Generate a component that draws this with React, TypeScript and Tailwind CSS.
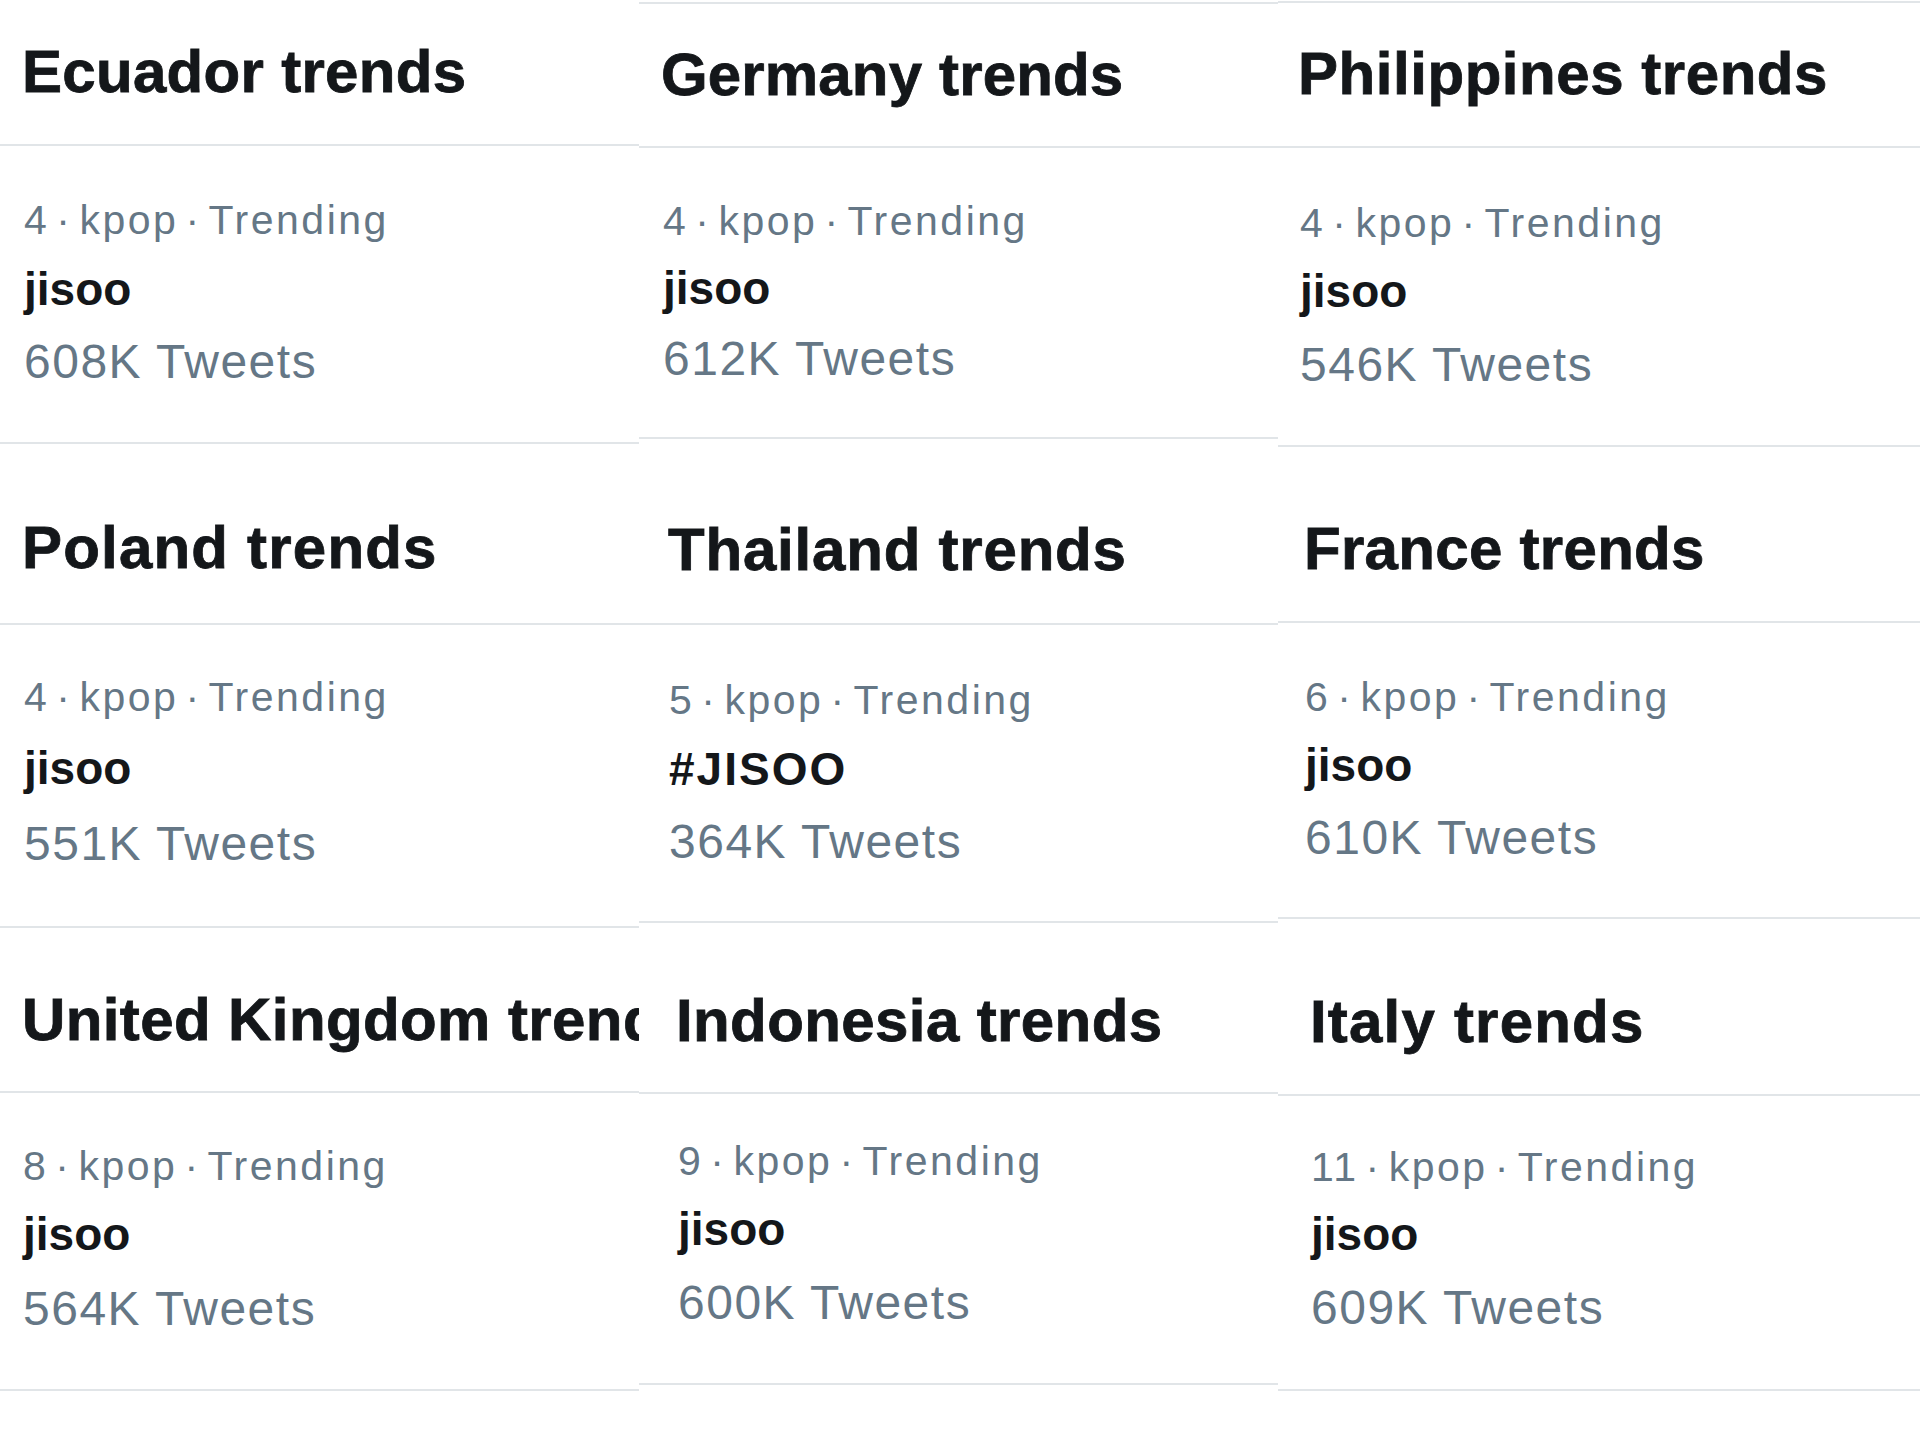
import type React from "react";

interface Cell {
  title: string;
  rank: string;
  name: string;
  count: string;
  head: string;
  titleCls: string;
  body: string;
  nameGap: string;
  countGap: string;
  nameCls?: string;
}

interface Column {
  cls: string;
  cells: Cell[];
}

const columns: Column[] = [
  {
    cls: "w-[639px]",
    cells: [
      {
        title: "Ecuador trends",
        rank: "4",
        name: "jisoo",
        count: "608K",
        head: "h-[146px] pt-[42px] pl-[22px]",
        titleCls: "tracking-[0.3px]",
        body: "h-[298px] pt-[54px] pl-[24px]",
        nameGap: "mt-[25px]",
        countGap: "mt-[26px]",
      },
      {
        title: "Poland trends",
        rank: "4",
        name: "jisoo",
        count: "551K",
        head: "h-[181px] pt-[74px] pl-[22px]",
        titleCls: "tracking-[1.2px]",
        body: "h-[303px] pt-[52px] pl-[24px]",
        nameGap: "mt-[27px]",
        countGap: "mt-[29px]",
      },
      {
        title: "United Kingdom trends",
        rank: "8",
        name: "jisoo",
        count: "564K",
        head: "h-[165px] pt-[62px] pl-[22px]",
        titleCls: "tracking-[0.4px]",
        body: "h-[298px] pt-[53px] pl-[23px]",
        nameGap: "mt-[24px]",
        countGap: "mt-[28px]",
      },
    ],
  },
  {
    cls: "w-[639px] pt-[2px]",
    cells: [
      {
        title: "Germany trends",
        rank: "4",
        name: "jisoo",
        count: "612K",
        head: "h-[146px] pt-[41px] pl-[22px] border-t-2",
        titleCls: "tracking-[0.15px]",
        body: "h-[291px] pt-[53px] pl-[24px]",
        nameGap: "mt-[23px]",
        countGap: "mt-[24px]",
      },
      {
        title: "Thailand trends",
        rank: "5",
        name: "#JISOO",
        count: "364K",
        head: "h-[186px] pt-[81px] pl-[29px]",
        titleCls: "tracking-[0.8px]",
        body: "h-[298px] pt-[55px] pl-[30px]",
        nameGap: "mt-[25px]",
        countGap: "mt-[26px]",
        nameCls: "tracking-[2px] font-semibold",
      },
      {
        title: "Indonesia trends",
        rank: "9",
        name: "jisoo",
        count: "600K",
        head: "h-[171px] pt-[68px] pl-[37px]",
        titleCls: "tracking-[0.4px]",
        body: "h-[291px] pt-[47px] pl-[39px]",
        nameGap: "mt-[24px]",
        countGap: "mt-[27px]",
      },
    ],
  },
  {
    cls: "w-[642px] pt-[1px]",
    cells: [
      {
        title: "Philippines trends",
        rank: "4",
        name: "jisoo",
        count: "546K",
        head: "h-[147px] pt-[41px] pl-[20px] border-t-2",
        titleCls: "tracking-[0.55px]",
        body: "h-[299px] pt-[55px] pl-[22px]",
        nameGap: "mt-[24px]",
        countGap: "mt-[27px]",
      },
      {
        title: "France trends",
        rank: "6",
        name: "jisoo",
        count: "610K",
        head: "h-[176px] pt-[72px] pl-[26px]",
        titleCls: "tracking-[0.3px]",
        body: "h-[296px] pt-[54px] pl-[27px]",
        nameGap: "mt-[24px]",
        countGap: "mt-[26px]",
      },
      {
        title: "Italy trends",
        rank: "11",
        name: "jisoo",
        count: "609K",
        head: "h-[177px] pt-[73px] pl-[32px]",
        titleCls: "tracking-[1.2px]",
        body: "h-[295px] pt-[51px] pl-[33px]",
        nameGap: "mt-[23px]",
        countGap: "mt-[27px]",
      },
    ],
  },
];

const Dot = () => <span className="mx-[7px]">·</span>;

const TrendCell: React.FC<{ cell: Cell }> = ({ cell }) => {
  return (
    <div className="flex flex-col">
      <div
        className={`${cell.head} border-b-2 border-[#e1e5e8] overflow-hidden whitespace-nowrap`}
      >
        <h2
          className={`text-[60px] leading-[60px] font-bold text-[#14171a] [-webkit-text-stroke:0.8px_#14171a] ${cell.titleCls}`}
        >
          {cell.title}
        </h2>
      </div>
      <div className={`${cell.body} border-b-2 border-[#e1e5e8] whitespace-nowrap`}>
        <p className="text-[41px] leading-[41px] tracking-[2.5px] text-[#657786]">
          {cell.rank}
          <Dot />
          kpop
          <Dot />
          Trending
        </p>
        <p
          className={`${cell.nameGap} text-[46px] leading-[46px] font-bold text-[#14171a] ${cell.nameCls ?? ""}`}
        >
          {cell.name}
        </p>
        <p
          className={`${cell.countGap} text-[48px] leading-[48px] tracking-[1.5px] text-[#657786]`}
        >
          {cell.count} Tweets
        </p>
      </div>
    </div>
  );
};

export default function App() {
  return (
    <div className="flex w-[1920px] h-[1440px] bg-white font-['Liberation_Sans',Arial,sans-serif]">
      {columns.map((col, i) => (
        <div key={i} className={`${col.cls} flex flex-col overflow-hidden shrink-0`}>
          {col.cells.map((cell) => (
            <TrendCell key={cell.title} cell={cell} />
          ))}
        </div>
      ))}
    </div>
  );
}
